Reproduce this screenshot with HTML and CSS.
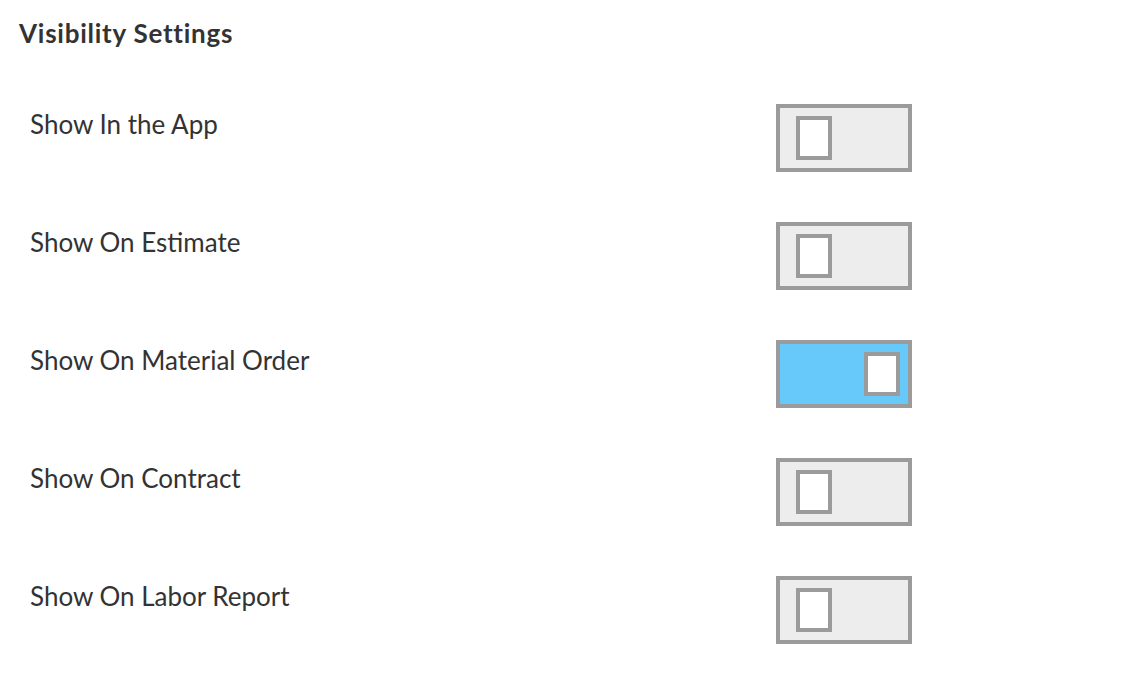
FILE: index.html
```html
<html>
    <head>
        <title>Visibility Settings</title>
        <link rel="stylesheet" href="styles.css">
    </head>
    <body>
        <div class="visibility_panel">
            <h2 class="panel_title">Visibility Settings</h2>
            <div class="setting_list">
                <div class="setting_row">
                    <span class="setting_label">Show In the App</span>
                    <span class="toggle"><span class="toggle_knob"></span></span>
                </div>
                <div class="setting_row">
                    <span class="setting_label">Show On Estimate</span>
                    <span class="toggle"><span class="toggle_knob"></span></span>
                </div>
                <div class="setting_row">
                    <span class="setting_label">Show On Material Order</span>
                    <span class="toggle toggle_on"><span class="toggle_knob"></span></span>
                </div>
                <div class="setting_row">
                    <span class="setting_label">Show On Contract</span>
                    <span class="toggle"><span class="toggle_knob"></span></span>
                </div>
                <div class="setting_row">
                    <span class="setting_label">Show On Labor Report</span>
                    <span class="toggle"><span class="toggle_knob"></span></span>
                </div>
            </div>
        </div>
    </body>
</html>
```

FILE: styles.css
```css
body {
    margin: 0;
    background: #fff;
    color: #333;
    font-family: 'Lato', 'Noto Sans', sans-serif;
}
.visibility_panel {
    padding: 18px 0 0 19px;
}
.panel_title {
    margin: 0;
    font-size: 26px;
    line-height: 30px;
    font-weight: bold;
    letter-spacing: 0.75px;
    color: #333;
}
.setting_list {
    display: flex;
    flex-direction: column;
    gap: 50px;
    margin-top: 56px;
    padding-left: 11px;
}
.setting_row {
    display: flex;
    align-items: flex-start;
}
.setting_label {
    width: 746px;
    font-size: 26px;
    line-height: 34px;
    padding-top: 3px;
}
.toggle {
    display: flex;
    box-sizing: border-box;
    width: 136px;
    height: 68px;
    padding: 8px 16px 9px;
    border: 4px solid #9b9b9b;
    background-color: #ededed;
}
.toggle_on {
    justify-content: flex-end;
    padding: 8px 8px 8px;
    background-color: #66c9fa;
}
.toggle_knob {
    box-sizing: border-box;
    width: 36px;
    height: 44px;
    border: 4px solid #9b9b9b;
    background-color: #fff;
}
```
